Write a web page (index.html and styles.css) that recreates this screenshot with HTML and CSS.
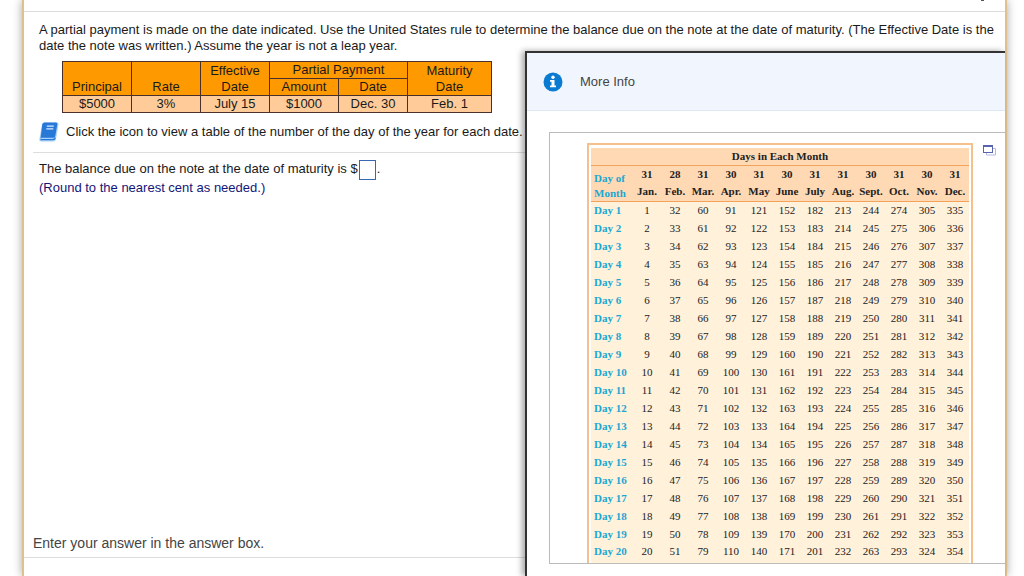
FILE: index.html
```html
<!DOCTYPE html>
<html lang="en">

<head>
    <meta charset="UTF-8">
    <meta name="viewport" content="width=device-width, initial-scale=1.0">
    <title>Partial Payment</title>
    <link rel="stylesheet" href="styles.css">
</head>

<body>
    <div class="panel">
        <div class="topbar"><span class="mark"></span></div>

        <main class="question">
            <p class="prompt">A partial payment is made on the date indicated. Use the United States rule to determine the balance due on the note at the date of maturity. (The Effective Date is the date the note was written.) Assume the year is not a leap year.</p>

            <table class="note-table">
                <thead>
                    <tr>
                        <th rowspan="2" class="col">Principal</th>
                        <th rowspan="2" class="col">Rate</th>
                        <th rowspan="2" class="col">Effective<br>Date</th>
                        <th colspan="2">Partial Payment</th>
                        <th rowspan="2" class="col-wide">Maturity<br>Date</th>
                    </tr>
                    <tr>
                        <th class="col">Amount</th>
                        <th class="col">Date</th>
                    </tr>
                </thead>
                <tbody>
                    <tr>
                        <td>$5000</td>
                        <td>3%</td>
                        <td>July 15</td>
                        <td>$1000</td>
                        <td>Dec. 30</td>
                        <td>Feb. 1</td>
                    </tr>
                </tbody>
            </table>

            <div class="hint">
                <button class="book" aria-label="View table">
                    <svg width="20" height="20" viewBox="0 0 20 20">
                        <path d="M5.500 .5H18q1.800 0 1.500 2L17 17.300q-.4 2.200-2.500 2.200H2.200Q0 19.500 .4 17L3 2.500Q3.400.5 5.500.5z" fill="#a9d0f7" />
                        <path d="M5.500 .5h11.500q1.700 0 1.300 2L16.300 14q-.3 1.800-2 1.800H3q-1.300 0-1.500 1.200L3.300 2.300Q3.700.5 5.500.5z" fill="#2878d8" />
                        <path d="M1.500 17.600h12.300q2 0 2.400-2" fill="none" stroke="#2878d8" stroke-width="1.400" />
                        <path d="M7.800 4.200h7M7.300 6.800h7" stroke="#d8eafb" stroke-width="1.300" />
                    </svg>
                </button>
                <span>Click the icon to view a table of the number of the day of the year for each date.</span>
            </div>

            <div class="answer">
                <label for="balance">The balance due on the note at the date of maturity is $</label><input type="text" id="balance">.
                <div class="round">(Round to the nearest cent as needed.)</div>
            </div>
        </main>

        <footer class="footer">
            <div class="message">Enter your answer in the answer box.</div>
            <div class="bottombar"></div>
        </footer>

        <section class="popup">
            <header class="popup-head">
                <svg width="20" height="20" viewBox="0 0 20 20">
                    <circle cx="10" cy="10" r="9.500" fill="#0a7bd0" />
                    <circle cx="10" cy="5.300" r="1.700" fill="#fff" />
                    <path d="M7 8h4.500v5.500H13v1.800H7v-1.800h1.500V9.800H7z" fill="#fff" />
                </svg>
                <span>More Info</span>
            </header>
            <div class="popup-box">
                <div class="days-frame">
                    <table class="days">
                        <colgroup>
                            <col class="label-col">
                            <col span="12">
                        </colgroup>
                        <thead>
                            <tr class="days-title">
                                <th colspan="13">Days in Each Month</th>
                            </tr>
                            <tr id="monthDays">
                                <th rowspan="2" class="day-of">Day of<br>Month</th>
                            </tr>
                            <tr id="monthNames" class="names"></tr>
                        </thead>
                        <tbody id="dayRows"></tbody>
                    </table>
                </div>
                <button class="expand" aria-label="Open in a new window">
                    <svg width="13" height="11" viewBox="0 0 13 11">
                        <path d="M10 3.500h2.500v6.500h-9V7" fill="none" stroke="#b4b9de" />
                        <rect x=".5" y=".5" width="9" height="7" fill="#fff" stroke="#5a63ad" />
                        <path d="M0 1h10" stroke="#5a63ad" stroke-width="2" />
                    </svg>
                </button>
            </div>
        </section>
    </div>

    <script>
        const months = [
            ["Jan.", 31], ["Feb.", 28], ["Mar.", 31], ["Apr.", 30],
            ["May", 31], ["June", 30], ["July", 31], ["Aug.", 31],
            ["Sept.", 30], ["Oct.", 31], ["Nov.", 30], ["Dec.", 31]
        ];

        document.getElementById("monthDays").innerHTML += months.map(m => `<th>${m[1]}</th>`).join("");
        document.getElementById("monthNames").innerHTML = months.map(m => `<th>${m[0]}</th>`).join("");

        let rows = "";
        for (let day = 1; day <= 20; day++) {
            let total = 0;
            rows += `<tr><th>Day ${day}</th>`;
            months.forEach(m => {
                rows += `<td>${total + day}</td>`;
                total += m[1];
            });
            rows += "</tr>";
        }
        document.getElementById("dayRows").innerHTML = rows;
    </script>
</body>

</html>
```
FILE: styles.css
```css
* {
    box-sizing: border-box;
}

body {
    margin: 0;
    padding: 0 17px 0 22px;
    background: #fff;
    color: #1a1a1a;
    font-family: "Liberation Sans", Arial, sans-serif;
    font-size: 13px;
    line-height: 16px;
    overflow: hidden;
}

button {
    display: block;
    padding: 0;
    border: none;
    background: none;
    cursor: pointer;
}

svg {
    display: block;
}

.panel {
    position: relative;
    display: flex;
    flex-direction: column;
    height: 100vh;
    border: solid #e0c08e;
    border-width: 0 2px;
    box-shadow: 0 0 9px rgba(0, 0, 0, 0.35);
}

.topbar {
    display: flex;
    justify-content: flex-end;
    height: 12px;
    padding-right: 21px;
    border-bottom: 1px solid #ddd;
}

.mark {
    width: 3px;
    height: 1px;
    background: #555;
}

.question {
    flex: 1;
    padding: 10px 6px 0 15px;
}

.prompt {
    margin: 0 0 7px;
}

.note-table {
    margin-left: 23px;
    border-collapse: collapse;
    text-align: center;
}

.note-table th,
.note-table td {
    height: 16px;
    padding: 0;
    border: 1px solid #4a2f2a;
    font-weight: normal;
    line-height: 16px;
}

.note-table th {
    background: #ff9900;
    vertical-align: bottom;
}

.note-table td {
    background: #ffcc99;
}

.note-table .col {
    width: 69px;
}

.note-table .col-wide {
    width: 84px;
}

.hint {
    display: flex;
    align-items: center;
    gap: 7px;
    margin-top: 9px;
}

.answer {
    margin: 10px 0 0 -6px;
    padding: 7px 0 0 6px;
    border-top: 1px solid #ddd;
}

.answer input {
    width: 17px;
    height: 20px;
    margin: 0 1px;
    padding: 0;
    border: 1px solid #3a68b0;
    vertical-align: middle;
}

.round {
    color: #15157a;
}

.message {
    padding: 0 9px 6px;
    color: #444;
    font-size: 14px;
}

.bottombar {
    height: 19px;
    border-top: 1px solid #ddd;
}

/* More Info window, lies over the question */
.popup {
    position: absolute;
    top: 51px;
    left: 501px;
    right: 0;
    bottom: 0;
    border: solid #333;
    border-width: 2px 0 0 2px;
    background: #fff;
    box-shadow: -3px 0 6px rgba(0, 0, 0, 0.35);
    overflow: hidden;
}

.popup-head {
    display: flex;
    align-items: center;
    gap: 17px;
    height: 58px;
    padding-left: 16px;
    border-bottom: 1px solid #dce8f2;
    background: #f1f6fe;
    color: #444;
}

.popup-box {
    display: flex;
    gap: 10px;
    margin: 21px 0 0 22px;
    padding: 10px 0 0 37px;
    border: 1px solid #bbb;
    border-right: none;
}

.days-frame {
    padding: 3px 2px 0;
    border: 2px solid #f6c08c;
    border-bottom: none;
}

.days {
    width: 378px;
    border-bottom: 3px solid #fff1da;
    border-collapse: collapse;
    table-layout: fixed;
    background: #fff1da;
    color: #222;
    font-family: "Liberation Serif", "Times New Roman", serif;
    font-size: 11px;
    line-height: 15px;
    text-align: center;
}

.days col {
    width: 28px;
}

.days .label-col {
    width: 42px;
}

.days th,
.days td {
    height: 18px;
    padding: 0;
    white-space: nowrap;
}

.days thead {
    background: #ffd9b3;
}

.days .days-title th {
    height: 17px;
}

.days .days-title,
.days .names {
    border-bottom: 1px solid #f2a25a;
}

.days .day-of {
    border-bottom: 1px solid #f2a25a;
    vertical-align: bottom;
}

.days .day-of,
.days tbody th {
    padding-left: 3px;
    color: #1ba7d4;
    text-align: left;
}

.expand {
    align-self: flex-start;
    margin-top: 2px;
}
```
